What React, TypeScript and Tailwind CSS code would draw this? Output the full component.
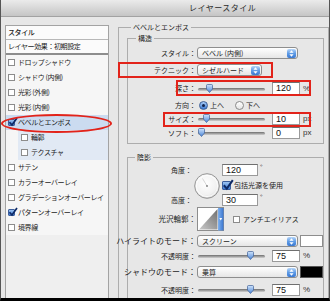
import React from "react";

function Box({ checked, big }: { checked?: boolean; big?: boolean }) {
  const size = big ? "w-[9px] h-[9px]" : "w-[7px] h-[7px]";
  if (checked)
    return (
      <span className={`relative inline-block shrink-0 ${size} rounded-[1px] border border-[#3c5e9c] bg-gradient-to-b from-[#9cc4f2] to-[#3d7bd4]`}>
        <svg className="absolute left-[-1px] top-[-3px]" width={big ? 12 : 10} height={big ? 12 : 10} viewBox="0 0 10 10">
          <path d="M1.5 5.2 L4 8 L9 1" stroke="#0e2a66" strokeWidth="1.7" fill="none" />
        </svg>
      </span>
    );
  return <span className={`inline-block shrink-0 ${size} border border-[#8c8c8c] bg-white`} />;
}

function Stepper() {
  return (
    <svg width="9" height="9" viewBox="0 0 9 9" className="shrink-0">
      <defs>
        <linearGradient id="stg" x1="0" y1="0" x2="0" y2="1">
          <stop offset="0" stopColor="#b6d5f8" />
          <stop offset="0.5" stopColor="#5e9be6" />
          <stop offset="1" stopColor="#3b79d2" />
        </linearGradient>
      </defs>
      <rect x="0" y="0" width="9" height="9" rx="2" fill="url(#stg)" />
      <path d="M4.5 1.3 L6.6 3.7 H2.4Z M4.5 7.7 L6.6 5.3 H2.4Z" fill="#fff" />
    </svg>
  );
}

function Popup({ text, className }: { text: string; className: string }) {
  return (
    <div className={`flex items-center h-[12px] rounded-[3px] border border-[#8e8e8e] bg-gradient-to-b from-white to-[#e6e6e6] pl-[4px] pr-[1px] ${className}`}>
      <span className="whitespace-nowrap leading-none">{text}</span>
      <span className="ml-auto flex">
        <Stepper />
      </span>
    </div>
  );
}

function Knob() {
  return (
    <svg width="7" height="9" viewBox="0 0 7 9">
      <defs>
        <linearGradient id="kg" x1="0" y1="0" x2="0" y2="1">
          <stop offset="0" stopColor="#cfe3fb" />
          <stop offset="1" stopColor="#4b86d8" />
        </linearGradient>
      </defs>
      <path d="M1.5 0.5 H5.5 A1 1 0 0 1 6.5 1.5 V5 L3.5 8.5 L0.5 5 V1.5 A1 1 0 0 1 1.5 0.5Z" fill="url(#kg)" stroke="#3d5f96" strokeWidth="0.7" />
    </svg>
  );
}

function Slider({ knob }: { knob: number }) {
  return (
    <div className="relative w-[67px] h-[12px] shrink-0">
      <div className="absolute left-0 right-0 top-[5px] h-[3px] rounded-full bg-gradient-to-b from-[#6e6e6e] to-[#d2d2d2]" />
      <div className="absolute top-[1px]" style={{ left: knob }}>
        <Knob />
      </div>
    </div>
  );
}

function Field({ v, className }: { v: string; className: string }) {
  return (
    <div className={`flex items-center bg-white border border-[#9a9a9a] border-t-[#6f6f6f] pl-[3px] font-['Liberation_Sans',sans-serif] text-[9px] leading-none text-[#111] ${className}`}>
      {v}
    </div>
  );
}

function Label({ t, className = "" }: { t: string; className?: string }) {
  return <div className={`flex justify-end shrink-0 whitespace-nowrap w-[68px] ${className}`}>{t}</div>;
}

function Unit({ t }: { t: string }) {
  return <span className="ml-[3px] font-['Liberation_Sans',sans-serif] text-[8px] text-[#333]">{t}</span>;
}

function Radio({ on }: { on?: boolean }) {
  return on ? (
    <span className="inline-flex items-center justify-center w-[9px] h-[9px] rounded-full border border-[#3a5c96] bg-gradient-to-b from-[#a7cbf6] to-[#3a78d2]">
      <span className="w-[3px] h-[3px] rounded-full bg-[#10204a]" />
    </span>
  ) : (
    <span className="inline-block w-[9px] h-[9px] rounded-full border border-[#8a8a8a] bg-gradient-to-b from-white to-[#e4e4e4]" />
  );
}

const items: { t: string; c?: boolean; sel?: boolean; sub?: boolean }[] = [
  { t: "ドロップシャドウ" },
  { t: "シャドウ (内側)" },
  { t: "光彩 (外側)" },
  { t: "光彩 (内側)" },
  { t: "ベベルとエンボス", c: true, sel: true },
  { t: "輪郭", sub: true },
  { t: "テクスチャ", sub: true },
  { t: "サテン" },
  { t: "カラーオーバーレイ" },
  { t: "グラデーションオーバーレイ" },
  { t: "パターンオーバーレイ", c: true },
  { t: "境界線" },
];

export default function App() {
  return (
    <div className="relative w-[330px] h-[301px] overflow-hidden bg-[#e7e7e7] border-l border-r border-[#555] border-b-[3px] border-b-black font-['Noto_Sans_CJK_JP',sans-serif] text-[7px] text-[#1c1c1c]">
      {/* title bar */}
      <div className="h-[17px] border-b border-[#a2a2a2] bg-gradient-to-b from-[#ebebeb] to-[#c5c5c5] flex items-center pl-[188px]">
        <span className="text-[8px] text-[#2a2a2a] tracking-[0.5px]">レイヤースタイル</span>
      </div>

      <div className="flex">
        {/* left panel */}
        <div className="ml-[4px] mt-[8px] w-[104px] h-[280px] border border-[#a3a3a3] bg-[#efefef] flex flex-col shrink-0 tracking-[-0.4px]">
          <div className="h-[14px] border-b border-[#b8b8b8] bg-[#fbfbfb] flex items-center pl-[2px] font-medium">スタイル</div>
          <div className="h-[15px] border-b-[2px] border-[#8d8d8d] bg-[#fbfbfb] flex items-center pl-[2px]">レイヤー効果：初期設定</div>
          <div className="flex flex-col bg-[#f6f6f6]">
            {items.map((it) => (
              <div
                key={it.t}
                className={`h-[15px] flex items-center ${it.sub ? "ml-[12px] pl-[3px] bg-[#e1e9f4]" : "pl-[2px]"} ${it.sel ? "bg-[#cbdbf0]" : ""}`}
              >
                <Box checked={it.c} />
                <span className="ml-[3px] whitespace-nowrap">{it.t}</span>
              </div>
            ))}
          </div>
        </div>

        {/* right panel */}
        <div className="pl-[9px] pt-[5px]">
          <fieldset className="w-[210px] h-[290px] border border-[#adadad] pl-[8px] pr-[4px]">
            <legend className="ml-[4px] px-[2px] leading-[10px]">ベベルとエンボス</legend>

            {/* 構造 */}
            <fieldset className="mt-[1px] border border-[#adadad] pb-[4px]">
              <legend className="ml-[8px] px-[2px] leading-[10px]">構造</legend>
              <div className="mt-[4px] h-[12px] flex items-center">
                <Label t="スタイル：" />
                <Popup text="ベベル (内側)" className="ml-[1px] w-[101px]" />
              </div>
              <div className="mt-[5px] h-[12px] flex items-center">
                <Label t="テクニック：" />
                <Popup text="シゼルハード" className="ml-[1px] w-[65px]" />
              </div>
              <div className="mt-[6px] h-[13px] flex items-center">
                <Label t="深さ：" />
                <div className="ml-[2px]"><Slider knob={8} /></div>
                <Field v="120" className="ml-[7px] w-[28px] h-[13px]" />
                <Unit t="%" />
              </div>
              <div className="mt-[4px] h-[12px] flex items-center">
                <Label t="方向：" />
                <span className="ml-[3px] flex"><Radio on /></span>
                <span className="ml-[2px]">上へ</span>
                <span className="ml-[11px] flex"><Radio /></span>
                <span className="ml-[2px]">下へ</span>
              </div>
              <div className="mt-[2px] h-[12px] flex items-center">
                <Label t="サイズ：" />
                <div className="ml-[2px]"><Slider knob={5} /></div>
                <Field v="10" className="ml-[7px] w-[28px] h-[12px]" />
                <Unit t="px" />
              </div>
              <div className="mt-[2px] h-[12px] flex items-center">
                <Label t="ソフト：" />
                <div className="ml-[2px]"><Slider knob={0} /></div>
                <Field v="0" className="ml-[7px] w-[28px] h-[12px]" />
                <Unit t="px" />
              </div>
            </fieldset>

            {/* 陰影 */}
            <fieldset className="mt-[8px] h-[200px] border border-[#adadad]">
              <legend className="ml-[7px] px-[2px] leading-[10px]">陰影</legend>
              <div className="mt-[2px] h-[42px] flex items-start">
                <div className="w-[64px] h-[42px] flex flex-col justify-between shrink-0">
                  <div className="h-[12px] flex items-center justify-end">角度：</div>
                  <div className="h-[12px] flex items-center justify-end">高度：</div>
                </div>
                <div className="ml-[2px] mt-[9px] shrink-0">
                  <svg width="26" height="26" viewBox="0 0 26 26">
                    <defs>
                      <radialGradient id="cg" cx="45%" cy="40%" r="65%">
                        <stop offset="0" stopColor="#ffffff" />
                        <stop offset="0.7" stopColor="#f1f1f1" />
                        <stop offset="1" stopColor="#cfcfcf" />
                      </radialGradient>
                    </defs>
                    <circle cx="13" cy="13" r="12.3" fill="url(#cg)" stroke="#8b8b8b" strokeWidth="0.9" />
                    <circle cx="13" cy="13" r="10.6" fill="none" stroke="#ffffff" strokeWidth="0.8" />
                    <line x1="13" y1="13" x2="8.5" y2="5.5" stroke="#c4c4c4" strokeWidth="0.7" />
                    <circle cx="13" cy="13" r="0.9" fill="#7a7a7a" />
                  </svg>
                </div>
                <div className="ml-[2px] flex flex-col">
                  <div className="h-[12px] flex items-start">
                    <Field v="120" className="w-[36px] h-[12px]" />
                    <span className="ml-[2px] text-[7px] leading-none">°</span>
                  </div>
                  <div className="mt-[4px] h-[10px] flex items-center">
                    <Box checked big />
                    <span className="ml-[3px] whitespace-nowrap">包括光源を使用</span>
                  </div>
                  <div className="mt-[4px] h-[12px] flex items-start">
                    <Field v="30" className="w-[36px] h-[12px]" />
                    <span className="ml-[2px] text-[7px] leading-none">°</span>
                  </div>
                </div>
              </div>

              <div className="mt-[1px] h-[24px] flex items-center">
                <Label t="光沢輪郭：" className="text-[7.5px]" />
                <div className="ml-[1px] flex">
                  <svg width="27" height="24" viewBox="0 0 27 24">
                    <defs>
                      <linearGradient id="tg" x1="0" y1="1" x2="1" y2="0">
                        <stop offset="0" stopColor="#c9c9c9" />
                        <stop offset="1" stopColor="#6f6f6f" />
                      </linearGradient>
                      <linearGradient id="bg2" x1="0" y1="0" x2="1" y2="0">
                        <stop offset="0" stopColor="#7fb1ee" />
                        <stop offset="1" stopColor="#3a76d0" />
                      </linearGradient>
                    </defs>
                    <rect x="0.5" y="0.5" width="26" height="23" fill="#ffffff" stroke="#8d8d8d" />
                    <polygon points="2,22.5 20.5,2 20.5,22.5" fill="url(#tg)" />
                    <rect x="21" y="1" width="5.5" height="22.5" fill="url(#bg2)" />
                    <path d="M22.3 11 L25.2 11 L23.75 13.5Z" fill="#fff" />
                  </svg>
                </div>
                <span className="ml-[9px] flex"><Box /></span>
                <span className="ml-[3px] whitespace-nowrap">アンチエイリアス</span>
              </div>

              <div className="mt-[4px] h-[12px] flex items-center">
                <Label t="ハイライトのモード：" className="text-[8px]" />
                <Popup text="スクリーン" className="ml-[1px] w-[101px]" />
                <div className="ml-[2px] w-[23px] h-[12px] bg-white border border-[#8d8d8d]" />
              </div>
              <div className="mt-[3px] h-[12px] flex items-center">
                <Label t="不透明度：" />
                <div className="ml-[2px]"><Slider knob={49} /></div>
                <Field v="75" className="ml-[7px] w-[28px] h-[12px]" />
                <Unit t="%" />
              </div>
              <div className="mt-[4px] h-[12px] flex items-center">
                <Label t="シャドウのモード：" className="text-[8px]" />
                <Popup text="乗算" className="ml-[1px] w-[101px]" />
                <div className="ml-[2px] w-[23px] h-[12px] bg-black border border-[#555]" />
              </div>
              <div className="mt-[6px] h-[12px] flex items-center">
                <Label t="不透明度：" />
                <div className="ml-[2px]"><Slider knob={49} /></div>
                <Field v="75" className="ml-[7px] w-[28px] h-[12px]" />
                <Unit t="%" />
              </div>
            </fieldset>
          </fieldset>
        </div>
      </div>

      {/* red annotations */}
      <div className="absolute left-[0px] top-[114px] w-[111px] h-[19px] rounded-[50%] border-2 border-[#e2231a]" />
      <div className="absolute left-[117px] top-[62px] w-[155px] h-[16px] border-2 border-[#e2231a]" />
      <div className="absolute left-[175px] top-[80px] w-[135px] h-[16px] border-2 border-[#e2231a]" />
      <div className="absolute left-[162px] top-[112px] w-[148px] h-[15px] border-2 border-[#e2231a]" />
    </div>
  );
}
